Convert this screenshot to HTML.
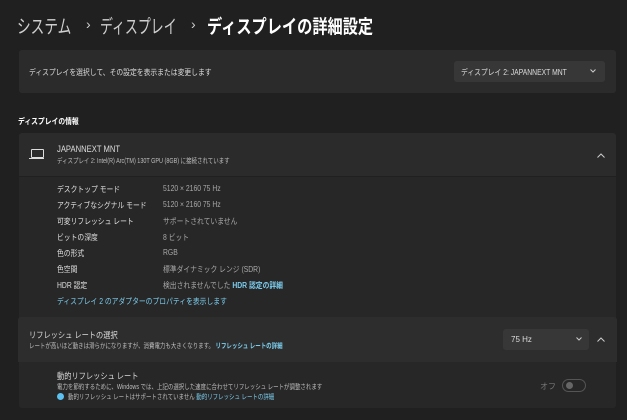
<!DOCTYPE html>
<html><head><meta charset="utf-8"><style>
body{margin:0;width:627px;height:420px;background:#202020;font-family:"Liberation Sans","Noto Sans CJK JP",sans-serif;color:#fff;overflow:hidden;position:relative}
.a{position:absolute;white-space:nowrap}
.sx{transform:scaleX(.85);transform-origin:0 0}
.sy{transform:scaleX(.78);transform-origin:0 0}
.t{font-size:19px;top:12px;color:#cfcfcf}
.card{position:absolute;left:19px;width:597px;background:#2b2b2b;border-radius:3px}
.dark{position:absolute;left:19px;width:597px;background:#272727}
.s{font-size:8px;color:#ddd}
.g{color:#bdbdbd}
.l{color:#7ccff0;font-weight:bold}
.r{font-size:8px;color:#e0e0e0;left:57px}
.v{font-size:8px;color:#a8a8a8;left:163px}
</style></head><body>
<div class="a t" style="left:17px;transform:scaleX(.72);transform-origin:0 0">システム</div>
<div class="a t" style="left:86px;font-size:14px;top:16px">›</div>
<div class="a t" style="left:100px;transform:scaleX(.68);transform-origin:0 0">ディスプレイ</div>
<div class="a t" style="left:191px;font-size:14px;top:16px">›</div>
<div class="a t" style="left:207px;color:#fff;font-weight:bold;transform:scaleX(.8);transform-origin:0 0">ディスプレイの詳細設定</div>
<div class="card" style="top:50px;height:43px"></div>
<div class="a s sx" style="left:29px;top:67px">ディスプレイを選択して、その設定を表示または変更します</div>
<div class="a" style="left:454px;top:61px;width:151px;height:21px;background:#373737;border-radius:3px"></div>
<div class="a s sx" style="left:461px;top:67px">ディスプレイ 2: JAPANNEXT MNT</div>
<svg class="a" style="left:590px;top:69px" width="6" height="4"><path d="M0.5 0.5L3 3L5.5 0.5" stroke="#ccc" fill="none"/></svg>
<div class="a sx" style="left:18px;top:116px;font-size:8px;font-weight:bold">ディスプレイの情報</div>
<div class="card" style="top:133px;height:43px;border-radius:3px 3px 0 0"></div>
<div class="dark" style="top:177px;height:163px"></div>
<div class="a" style="left:31px;top:149px;width:11px;height:7px;border:1px solid #ddd;border-radius:1px"></div>
<div class="a" style="left:29px;top:158px;width:15px;height:1px;background:#ddd"></div>
<div class="a s sx" style="left:57px;top:144px;font-size:9px">JAPANNEXT MNT</div>
<div class="a s g sy" style="left:57px;top:156px;font-size:7px">ディスプレイ 2: Intel(R) Arc(TM) 130T GPU (8GB) に接続されています</div>
<svg class="a" style="left:597px;top:153px" width="8" height="5"><path d="M0.5 4.5L4 1L7.5 4.5" stroke="#ccc" fill="none"/></svg>
<div class="a r sx" style="top:184px">デスクトップ モード</div><div class="a v sx" style="top:184px">5120 × 2160 75 Hz</div>
<div class="a r sx" style="top:200px">アクティブなシグナル モード</div><div class="a v sx" style="top:200px">5120 × 2160 75 Hz</div>
<div class="a r sx" style="top:216px">可変リフレッシュ レート</div><div class="a v sx" style="top:216px">サポートされていません</div>
<div class="a r sx" style="top:232px">ビットの深度</div><div class="a v sx" style="top:232px">8 ビット</div>
<div class="a r sx" style="top:248px">色の形式</div><div class="a v sx" style="top:248px">RGB</div>
<div class="a r sx" style="top:264px">色空間</div><div class="a v sx" style="top:264px">標準ダイナミック レンジ (SDR)</div>
<div class="a r sx" style="top:280px">HDR 認定</div><div class="a v sx" style="top:280px">検出されませんでした <span class="l">HDR 認定の詳細</span></div>
<div class="a r sx" style="top:296px;color:#7ccff0">ディスプレイ 2 のアダプターのプロパティを表示します</div>
<div class="card" style="top:317px;height:45px;background:#2d2d2d;left:18px;width:599px;border-radius:3px 3px 0 0"></div>
<div class="dark" style="top:362px;height:46px;border-radius:0 0 3px 3px"></div>
<div class="a s sx" style="left:29px;top:329px;font-size:8.5px">リフレッシュ レートの選択</div>
<div class="a s g sy" style="left:29px;top:341px;font-size:7px">レートが高いほど動きは滑らかになりますが、消費電力も大きくなります。 <span style="color:#7ccff0;font-weight:bold">リフレッシュ レートの詳細</span></div>
<div class="a" style="left:503px;top:329px;width:86px;height:21px;background:#373737;border-radius:3px"></div>
<div class="a s" style="left:511px;top:335px">75 Hz</div>
<svg class="a" style="left:576px;top:337px" width="6" height="4"><path d="M0.5 0.5L3 3L5.5 0.5" stroke="#ccc" fill="none"/></svg>
<svg class="a" style="left:597px;top:337px" width="8" height="5"><path d="M0.5 4.5L4 1L7.5 4.5" stroke="#ccc" fill="none"/></svg>
<div class="a s sx" style="left:57px;top:370px;font-size:8.5px">動的リフレッシュ レート</div>
<div class="a s g sy" style="left:57px;top:382px;font-size:7px">電力を節約するために、Windows では、上記の選択した速度に合わせてリフレッシュ レートが調整されます</div>
<div class="a" style="left:57px;top:393px;width:7px;height:7px;border-radius:50%;background:#5cc0f0"></div>
<div class="a s g sy" style="left:68px;top:392px;font-size:7px">動的リフレッシュ レートはサポートされていません <span style="color:#7ccff0">動的リフレッシュ レートの詳細</span></div>
<div class="a s" style="left:540px;top:381px;color:#777">オフ</div>
<div class="a" style="left:562px;top:379px;width:22px;height:11px;border:1px solid #555;border-radius:7px"></div>
<div class="a" style="left:566px;top:382px;width:7px;height:7px;border-radius:50%;background:#666"></div>
</body></html>
